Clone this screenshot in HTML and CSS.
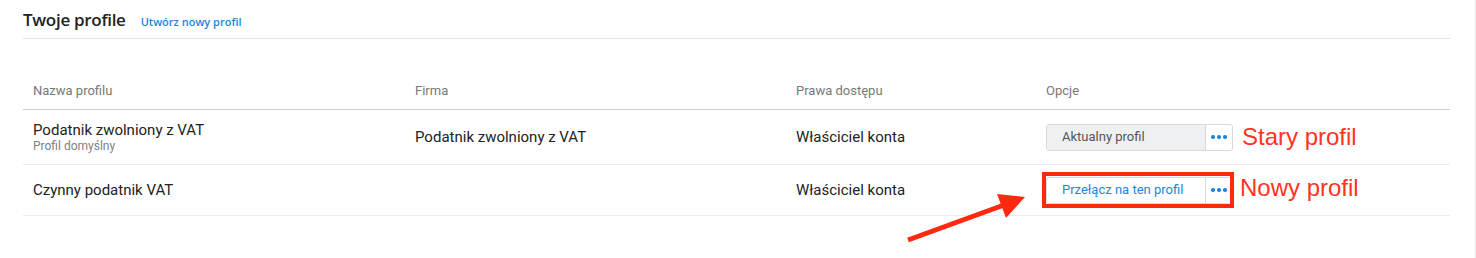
FILE: index.html
```html
<!DOCTYPE html>
<html lang="pl">
<head>
<meta charset="utf-8">
<title>Twoje profile</title>
<link rel="stylesheet" href="styles.css">
</head>
<body>
<div class="page">
  <div class="head">
    <h1 class="title">Twoje profile</h1>
    <a class="new-link" href="#">Utwórz nowy profil</a>
  </div>

  <div class="table">
    <div class="row row-head">
      <div class="cell">Nazwa profilu</div>
      <div class="cell">Firma</div>
      <div class="cell">Prawa dostępu</div>
      <div class="cell">Opcje</div>
    </div>

    <div class="row row-1">
      <div class="cell name-cell">
        <div class="name">Podatnik zwolniony z VAT</div>
        <div class="sub">Profil domyślny</div>
      </div>
      <div class="cell">Podatnik zwolniony z VAT</div>
      <div class="cell">Właściciel konta</div>
      <div class="cell opts">
        <div class="btn-group current">
          <span class="btn-main">Aktualny profil</span>
          <span class="btn-more"><i></i><i></i><i></i></span>
        </div>
        <span class="note">Stary profil</span>
      </div>
    </div>

    <div class="row row-2">
      <div class="cell">Czynny podatnik VAT</div>
      <div class="cell"></div>
      <div class="cell">Właściciel konta</div>
      <div class="cell opts">
        <div class="btn-group switch">
          <span class="btn-main">Przełącz na ten profil</span>
          <span class="btn-more"><i></i><i></i><i></i></span>
          <span class="frame"></span>
        </div>
        <span class="note note-new">Nowy profil</span>
      </div>
    </div>
  </div>

  <svg class="arrow" width="1476" height="258" viewBox="0 0 1476 258">
    <line x1="908" y1="240" x2="1004" y2="205" stroke="#ff2a0d" stroke-width="5"/>
    <polygon points="1025,197 997,194 1006,218" fill="#ff2a0d"/>
  </svg>
</div>
</body>
</html>
```

FILE: styles.css
```css
html, body {
  margin: 0;
  padding: 0;
  background: #ffffff;
}

.page {
  position: relative;
  width: 1476px;
  height: 258px;
  box-sizing: border-box;
  padding: 0 25px 0 23px;
  border-right: 1px solid #e6e6e6;
  font-family: Roboto, "Liberation Sans", Arial, sans-serif;
  color: #222;
  overflow: hidden;
}

.head {
  height: 39px;
  box-sizing: border-box;
  padding-top: 10px;
  border-bottom: 1px solid #e3e3e3;
  display: flex;
  align-items: baseline;
  gap: 15px;
}

.title {
  margin: 0;
  font-family: "Open Sans", "Noto Sans", sans-serif;
  font-weight: 600;
  font-size: 17px;
  line-height: 20px;
  color: #222;
  letter-spacing: -0.3px;
}

.new-link {
  font-family: "Open Sans", "Noto Sans", sans-serif;
  font-weight: 600;
  font-size: 11px;
  color: #1a86df;
  text-decoration: none;
}

.table {
  margin-top: 34px;
}

.row {
  display: grid;
  grid-template-columns: 382px 381px 250px 415px;
}

.cell {
  padding: 0 10px;
  display: flex;
  align-items: center;
  font-size: 15px;
  line-height: 18px;
  color: #222;
}

.row-head {
  border-bottom: 1px solid #cdcdcd;
}

.row-head .cell {
  padding: 10px 10px;
  font-size: 13px;
  line-height: 16px;
  color: #787878;
}

.row-1 {
  border-bottom: 1px solid #ececec;
}

.row-1 .name-cell {
  flex-direction: column;
  align-items: flex-start;
  padding-top: 11px;
  padding-bottom: 11px;
}

.name {
  font-size: 15px;
  line-height: 18px;
}

.sub {
  font-size: 12px;
  line-height: 14px;
  color: #808080;
}

.row-2 {
  height: 51px;
  box-sizing: border-box;
  border-bottom: 1px solid #ececec;
}

.opts {
  gap: 9px;
}

.btn-group {
  position: relative;
  display: flex;
  height: 27px;
  width: 187px;
  box-sizing: border-box;
  border: 1px solid #d6d9dd;
  border-radius: 3px;
  background: #fff;
}

.btn-main {
  width: 159px;
  box-sizing: border-box;
  padding-left: 15px;
  display: flex;
  align-items: center;
  font-size: 13px;
  border-right: 1px solid #d6d9dd;
}

.current .btn-main {
  background: #eff0f2;
  color: #555;
  border-radius: 2px 0 0 2px;
}

.switch .btn-main {
  color: #1a86df;
}

.btn-more {
  flex: 1;
  display: flex;
  align-items: center;
  justify-content: center;
  gap: 2.5px;
}

.btn-more i {
  width: 3.5px;
  height: 3.5px;
  border-radius: 50%;
  background: #1a86df;
}

.frame {
  position: absolute;
  left: -5px;
  top: -6px;
  right: -2px;
  bottom: -5px;
  border: 4px solid #ff2a0d;
  pointer-events: none;
}

.note {
  font-family: "Liberation Sans", Arial, sans-serif;
  font-size: 24px;
  line-height: 28px;
  color: #ff3322;
}

.note-new {
  margin-left: -2px;
  position: relative;
  top: -2px;
}

.arrow {
  position: absolute;
  left: 0;
  top: 0;
  pointer-events: none;
}
```
